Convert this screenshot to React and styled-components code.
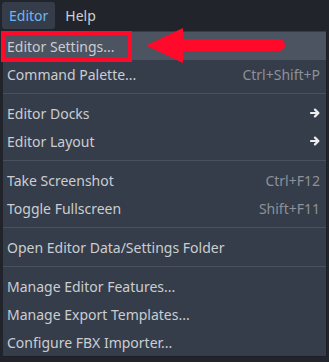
import styled, { createGlobalStyle } from "styled-components";

const GlobalStyle = createGlobalStyle`
  html, body {
    margin: 0;
    padding: 0;
    background: #21252b;
    font-family: "Noto Sans", "Open Sans", sans-serif;
  }
`;

const Page = styled.div`
  position: relative;
  width: 329px;
  height: 362px;
  overflow: hidden;
  background: #21252b;
`;

const MenuBar = styled.div`
  display: flex;
  align-items: center;
  gap: 3px;
  height: 31px;
  padding: 0 2px;
  box-sizing: border-box;
`;

const MenuButton = styled.div`
  height: 27px;
  display: flex;
  align-items: center;
  padding: 0 7px;
  border-radius: 3px;
  font-size: 14px;
  background: ${({ $active }) => ($active ? "#363d4a" : "transparent")};
  color: ${({ $active }) => ($active ? "#70b5f2" : "#cdcfd3")};
`;

const Popup = styled.div`
  margin-left: 3px;
  width: 323px;
  background: #363d4a;
  border-right: 1px solid #1c1f25;
  border-bottom: 1px solid #1c1f25;
  padding: 1px 0 0;
  display: flex;
  flex-direction: column;
`;

const Item = styled.div`
  height: 28px;
  display: flex;
  align-items: center;
  justify-content: space-between;
  padding: 0 6px 0 4px;
  font-size: 14px;
  color: #cbcdd1;
  background: ${({ $hover }) => ($hover ? "#4c5361" : "transparent")};
`;

const Shortcut = styled.span`
  color: #8d9199;
`;

const Separator = styled.div`
  height: 11px;
  display: flex;
  align-items: center;
  &::after {
    content: "";
    flex: 1;
    height: 1px;
    background: #4a505c;
  }
`;

const Callout = styled.div`
  position: absolute;
  left: 1px;
  top: 31px;
  width: 131px;
  height: 31px;
  box-sizing: border-box;
  border: 4px solid #ff0a2b;
`;

const ArrowSvg = styled.svg`
  position: absolute;
  left: 0;
  top: 0;
`;

const SubArrow = () => (
  <svg width="10" height="10" viewBox="0 0 10 10">
    <path d="M1 5 H8 M5 1.6 L8.4 5 L5 8.4" stroke="#ecedef" strokeWidth="2.2" fill="none" strokeLinecap="round" strokeLinejoin="round" />
  </svg>
);

const rows = [
  { label: "Editor Settings...", hover: true },
  { label: "Command Palette...", shortcut: "Ctrl+Shift+P" },
  "sep",
  { label: "Editor Docks", sub: true },
  { label: "Editor Layout", sub: true },
  "sep",
  { label: "Take Screenshot", shortcut: "Ctrl+F12" },
  { label: "Toggle Fullscreen", shortcut: "Shift+F11" },
  "sep",
  { label: "Open Editor Data/Settings Folder" },
  "sep",
  { label: "Manage Editor Features..." },
  { label: "Manage Export Templates..." },
  { label: "Configure FBX Importer..." },
];

export default function App() {
  return (
    <Page>
      <GlobalStyle />
      <MenuBar>
        <MenuButton $active>Editor</MenuButton>
        <MenuButton>Help</MenuButton>
      </MenuBar>
      <Popup>
        {rows.map((r, i) =>
          r === "sep" ? (
            <Separator key={i} />
          ) : (
            <Item key={i} $hover={r.hover}>
              <span>{r.label}</span>
              {r.shortcut && <Shortcut>{r.shortcut}</Shortcut>}
              {r.sub && <SubArrow />}
            </Item>
          )
        )}
      </Popup>
      <Callout />
      <ArrowSvg width="329" height="362">
        <polygon points="146,45.5 183,28 183,63" fill="#ff0a2b" />
        <line x1="180" y1="45" x2="279" y2="45" stroke="#ff0a2b" strokeWidth="12" strokeLinecap="round" />
      </ArrowSvg>
    </Page>
  );
}
